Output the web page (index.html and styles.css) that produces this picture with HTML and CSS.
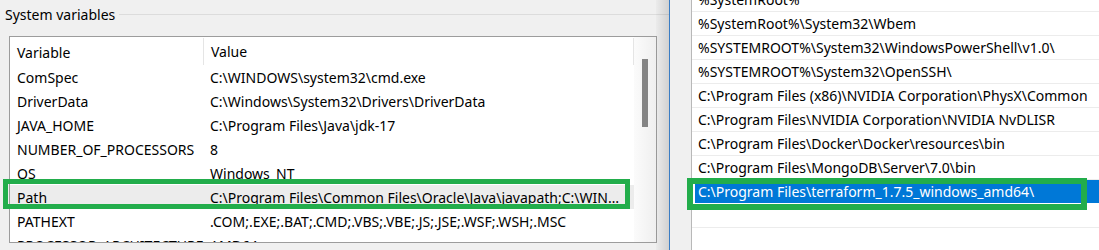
FILE: index.html
```html
<!DOCTYPE html>
<html lang="en">
<head>
<meta charset="UTF-8">
<title>Environment Variables</title>
<link rel="stylesheet" href="styles.css">
</head>
<body>
  <div class="screen">
    <div class="sys-pane">
      <div class="group-title">
        <span>System variables</span>
        <div class="group-line"></div>
      </div>
      <div class="listbox">
        <div class="list-main">
          <div class="list-head">
            <div class="col-name">Variable</div>
            <div class="col-value">Value</div>
          </div>
          <div class="row"><div class="col-name">ComSpec</div><div class="col-value">C:\WINDOWS\system32\cmd.exe</div></div>
          <div class="row"><div class="col-name">DriverData</div><div class="col-value">C:\Windows\System32\Drivers\DriverData</div></div>
          <div class="row"><div class="col-name">JAVA_HOME</div><div class="col-value">C:\Program Files\Java\jdk-17</div></div>
          <div class="row"><div class="col-name">NUMBER_OF_PROCESSORS</div><div class="col-value">8</div></div>
          <div class="row"><div class="col-name">OS</div><div class="col-value">Windows_NT</div></div>
          <div class="row hover"><div class="col-name">Path</div><div class="col-value">C:\Program Files\Common Files\Oracle\Java\javapath;C:\WINDOWS\system32;C:\WINDOWS</div></div>
          <div class="row"><div class="col-name">PATHEXT</div><div class="col-value">.COM;.EXE;.BAT;.CMD;.VBS;.VBE;.JS;.JSE;.WSF;.WSH;.MSC</div></div>
          <div class="row"><div class="col-name">PROCESSOR_ARCHITECTURE</div><div class="col-value">AMD64</div></div>
        </div>
        <div class="scrollbar">
          <div class="thumb"></div>
        </div>
      </div>
      <div class="shadow"></div>
    </div>

    <div class="edit-pane">
      <div class="path-list">
        <div class="path-rows">
          <div class="path">%SystemRoot%</div>
          <div class="path">%SystemRoot%\System32\Wbem</div>
          <div class="path">%SYSTEMROOT%\System32\WindowsPowerShell\v1.0\</div>
          <div class="path">%SYSTEMROOT%\System32\OpenSSH\</div>
          <div class="path">C:\Program Files (x86)\NVIDIA Corporation\PhysX\Common</div>
          <div class="path">C:\Program Files\NVIDIA Corporation\NVIDIA NvDLISR</div>
          <div class="path">C:\Program Files\Docker\Docker\resources\bin</div>
          <div class="path">C:\Program Files\MongoDB\Server\7.0\bin</div>
          <div class="path selected"><span>C:\Program Files\terraform_1.7.5_windows_amd64\</span></div>
          <div class="path"></div>
          <div class="path"></div>
        </div>
      </div>
    </div>

    <div class="mark mark-left"></div>
    <div class="mark mark-right"></div>
  </div>
</body>
</html>
```

FILE: styles.css
```css
body {
  margin: 0;
  padding: 0;
  background-color: #f0f0f0;
  font-family: "Noto Sans", "Open Sans", sans-serif;
  font-size: 14px;
  color: #000;
}

.screen {
  position: relative;
  display: flex;
  width: 1099px;
  height: 250px;
  overflow: hidden;
}

/* left window: System variables */
.sys-pane {
  display: flex;
  flex-direction: column;
  width: 669px;
  flex-shrink: 0;
  position: relative;
}

.group-title {
  display: flex;
  align-items: center;
  gap: 4px;
  height: 29px;
  padding-left: 5px;
  margin-top: 0;
}

.group-title span {
  line-height: 29px;
  position: relative;
  top: 0;
}

.group-line {
  flex: 1;
  border-top: 1px solid #dcdcdc;
}

.listbox {
  display: flex;
  margin: 7px 0 0 9px;
  width: 646px;
  height: 205px;
  border: 1px solid #9c9c9c;
  background-color: #fff;
  overflow: hidden;
}

.list-main {
  width: 624px;
}

.list-head,
.row {
  display: flex;
  align-items: center;
}

.list-head {
  height: 28px;
  padding-top: 2px;
  box-sizing: border-box;
}

.row {
  height: 24px;
}

.row.hover {
  background-color: #ececec;
}

.col-name {
  width: 186px;
  padding-left: 7px;
  white-space: nowrap;
  flex-shrink: 0;
}

.col-value {
  flex: 1;
  padding-left: 7px;
  padding-right: 10px;
  white-space: nowrap;
  overflow: hidden;
  text-overflow: ellipsis;
}

.list-head .col-value {
  border-left: 1px solid #e5e5e5;
  border-right: 1px solid #e5e5e5;
  align-self: stretch;
  display: flex;
  align-items: center;
  margin-top: -1px;
}

.scrollbar {
  width: 22px;
  background: linear-gradient(to right, #fbfbfb, #efefef);
  padding-top: 22px;
  box-sizing: border-box;
}

.thumb {
  width: 6px;
  height: 68px;
  margin-left: 8px;
  background-color: #858585;
}

.shadow {
  position: absolute;
  top: 0;
  right: 0;
  width: 13px;
  height: 250px;
  background: linear-gradient(to right, rgba(0, 0, 0, 0.02), rgba(0, 0, 0, 0.13));
}

/* right window: Edit environment variable */
.edit-pane {
  flex: 1;
  border-left: 1px solid #3a7dc4;
  padding-left: 21px;
}

.path-list {
  height: 250px;
  border-left: 1px solid #b8b8b8;
  background-color: #fff;
  overflow: hidden;
}

.path-rows {
  margin-top: -12px;
}

.path {
  height: 23px;
  line-height: 23px;
  border-bottom: 1px solid #ececec;
  padding-left: 6px;
  white-space: nowrap;
}

.path.selected {
  margin-left: 3px;
  padding-left: 3px;
  background-color: #0078d7;
  color: #fff;
  border-bottom-color: #fff;
}

/* green highlight frames */
.mark {
  position: absolute;
  box-sizing: border-box;
  border-style: solid;
  border-color: #22ad4b;
}

.mark-left {
  left: 3px;
  top: 179px;
  width: 627px;
  height: 30px;
  border-width: 5px;
}

.mark-right {
  left: 687px;
  top: 178px;
  width: 400px;
  height: 32px;
  border-width: 6px;
}
```
